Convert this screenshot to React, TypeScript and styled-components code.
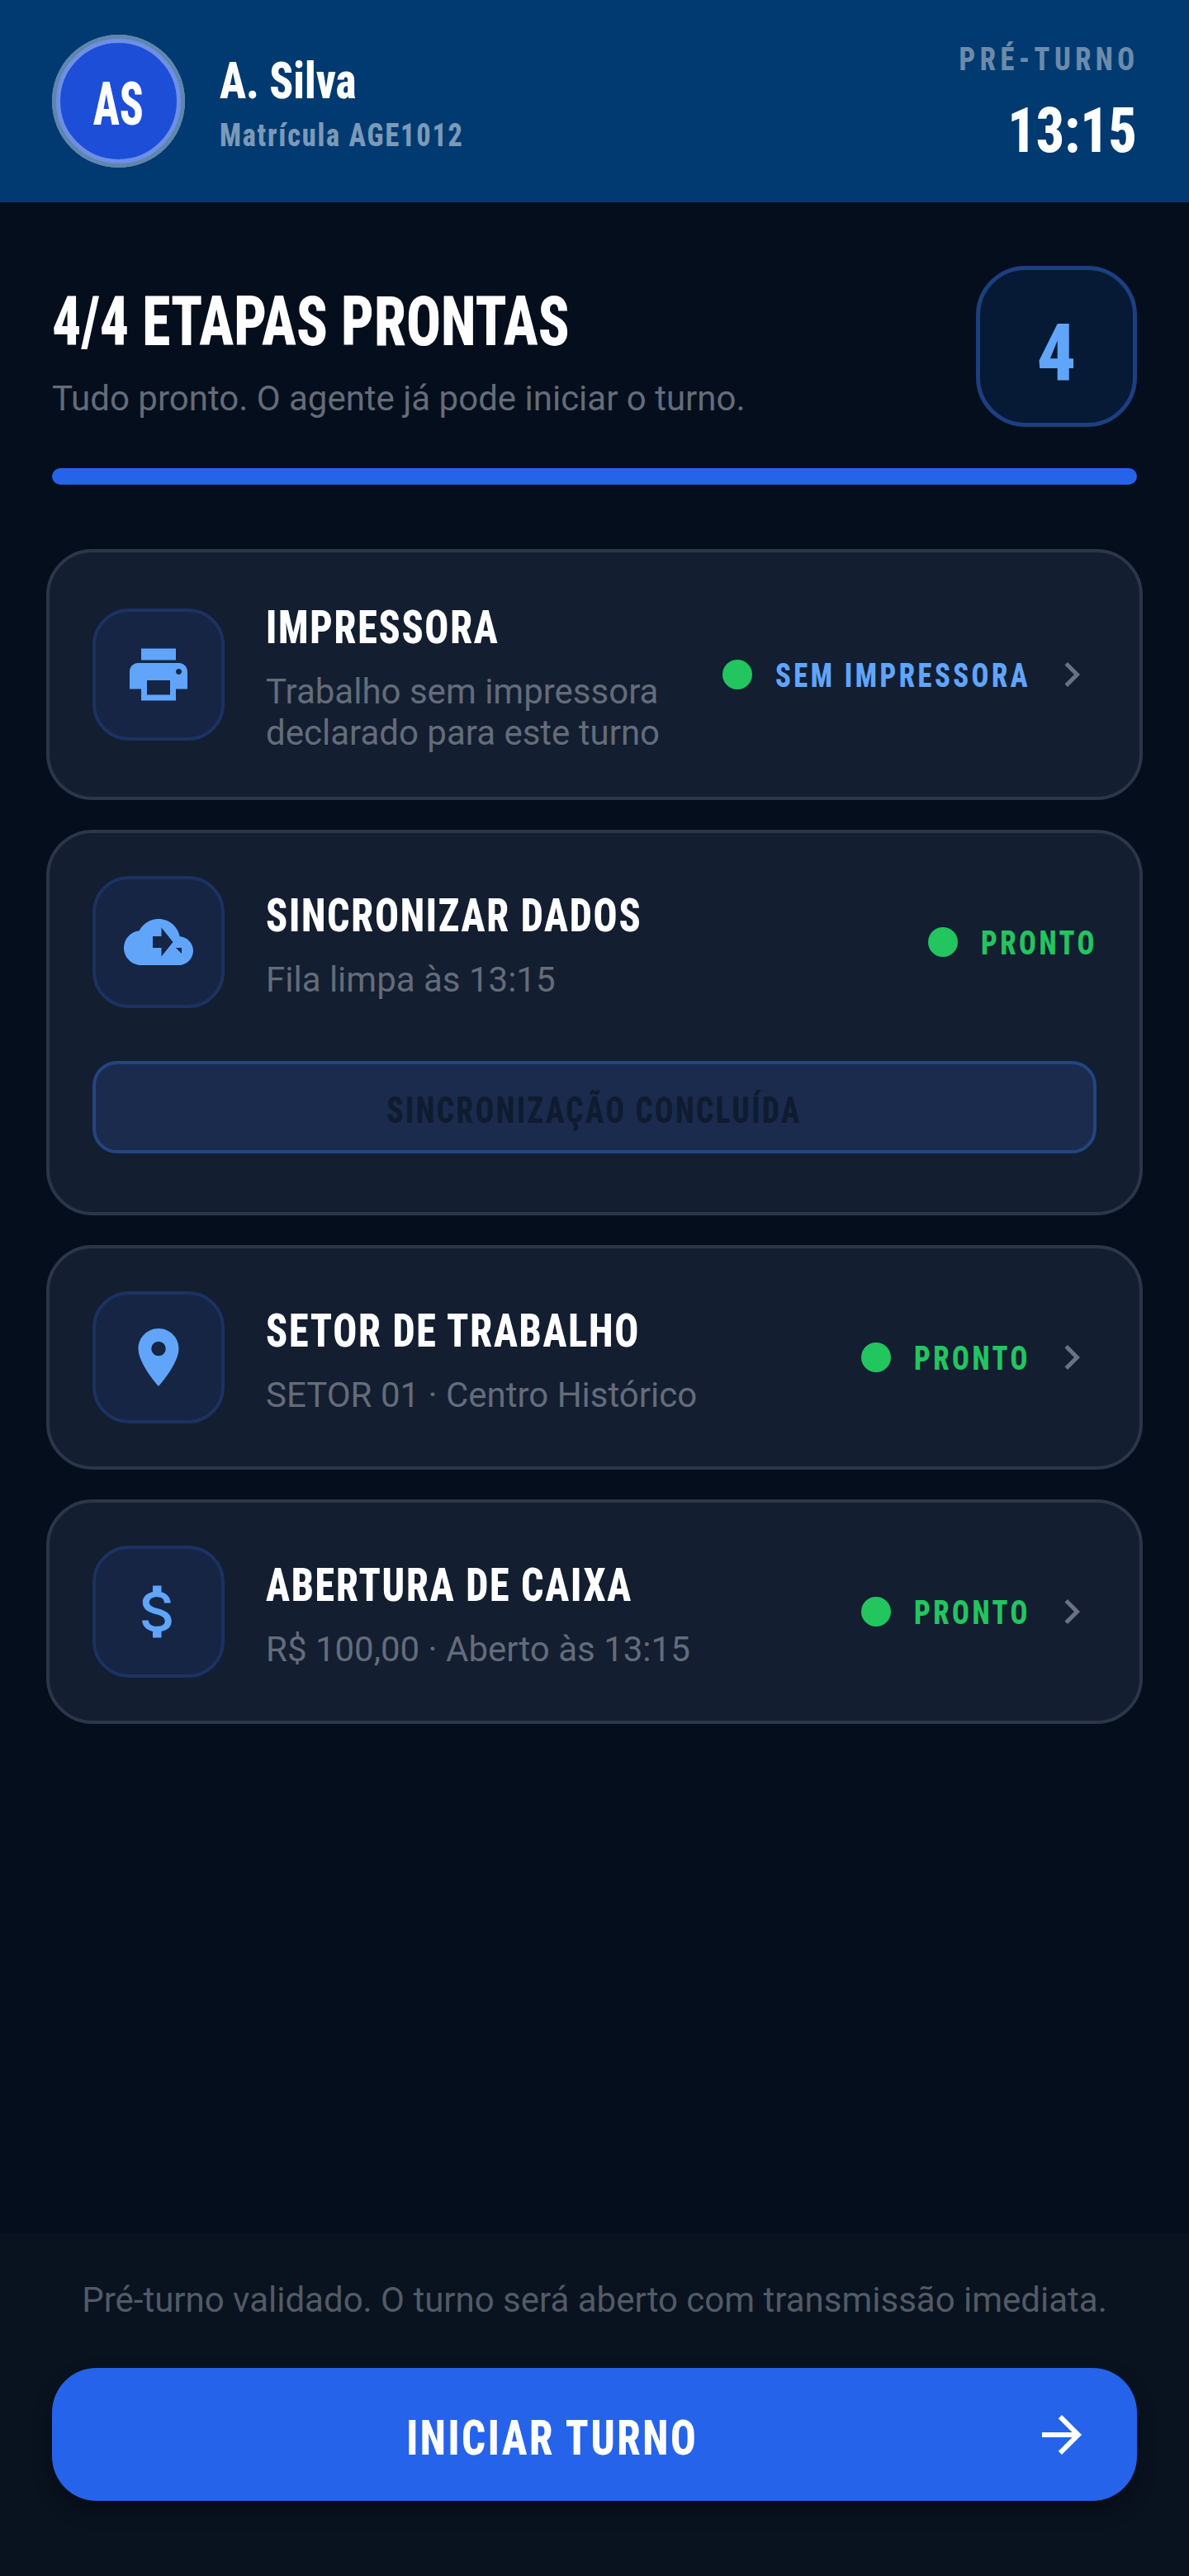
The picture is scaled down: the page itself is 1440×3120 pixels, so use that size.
import { FC, ReactNode } from "react";
import styled, { createGlobalStyle, css } from "styled-components";
import { MdPrint, MdLocationOn, MdAttachMoney, MdArrowForward, MdChevronRight } from "react-icons/md";

const GlobalStyle = createGlobalStyle`
  html, body { margin: 0; padding: 0; background: #050e1c; }
  * { box-sizing: border-box; }
`;

// no Barlow Condensed on this machine: Roboto at its narrowest width, squeezed a bit more
const condensed = (size: number, squeeze: number, origin = "left") => css`
  display: inline-block;
  white-space: nowrap;
  font-family: "Roboto", sans-serif;
  font-stretch: 75%;
  font-weight: 800;
  font-size: ${size}px;
  transform: scaleX(${squeeze});
  transform-origin: ${origin} center;
`;

const CloudIcon: FC = () => (
  <svg width="84" height="84" viewBox="0 0 24 24" fill="currentColor" fillRule="evenodd">
    <path d="M19.35 10.04C18.67 6.59 15.64 4 12 4 9.11 4 6.6 5.64 5.35 8.04 2.34 8.36 0 10.91 0 14c0 3.31 2.69 6 6 6h13c2.76 0 5-2.24 5-5 0-2.64-2.05-4.78-4.65-4.96zM10 10h3V7l4 5-4 5v-3h-3zM18 14h2v2z" />
  </svg>
);

type StepProps = {
  icon: ReactNode;
  title: string;
  detail: ReactNode;
  status: string;
  statusWidth: number;
  tone?: "green" | "blue";
  chevron?: boolean;
  children?: ReactNode;
};

const Step: FC<StepProps> = ({ icon, title, detail, status, statusWidth, tone = "green", chevron = true, children }) => (
  <Card>
    <CardRow>
      <IconBox>{icon}</IconBox>
      <CardText>
        <CardTitle>{title}</CardTitle>
        <CardDetail>{detail}</CardDetail>
      </CardText>
      <Status>
        <Dot />
        <StatusLabel $tone={tone} $width={statusWidth}>{status}</StatusLabel>
      </Status>
      {chevron && <Chevron><MdChevronRight size={60} /></Chevron>}
    </CardRow>
    {children}
  </Card>
);

export default function App() {
  return (
    <Page>
      <GlobalStyle />
      <Header>
        <Avatar><AvatarText>AS</AvatarText></Avatar>
        <AgentInfo>
          <AgentName>A. Silva</AgentName>
          <AgentId>Matrícula AGE1012</AgentId>
        </AgentInfo>
        <ShiftInfo>
          <ShiftLabel>PRÉ-TURNO</ShiftLabel>
          <ShiftTime>13:15</ShiftTime>
        </ShiftInfo>
      </Header>
      <Summary>
        <SummaryTop>
          <SummaryCopy>
            <SummaryTitle>4/4 ETAPAS PRONTAS</SummaryTitle>
            <SummaryText>Tudo pronto. O agente já pode iniciar o turno.</SummaryText>
          </SummaryCopy>
          <CountBadge><CountDigit>4</CountDigit></CountBadge>
        </SummaryTop>
        <ProgressTrack />
      </Summary>
      <Steps>
        <Step
          icon={<MdPrint size={84} />}
          title="IMPRESSORA"
          detail={<>Trabalho sem impressora<br />declarado para este turno</>}
          status="SEM IMPRESSORA"
          statusWidth={308}
          tone="blue"
        />
        <Step icon={<CloudIcon />} title="SINCRONIZAR DADOS" detail="Fila limpa às 13:15" status="PRONTO" statusWidth={140} chevron={false}>
          <SyncButton><SyncLabel>SINCRONIZAÇÃO CONCLUÍDA</SyncLabel></SyncButton>
        </Step>
        <Step icon={<MdLocationOn size={84} />} title="SETOR DE TRABALHO" detail="SETOR 01 · Centro Histórico" status="PRONTO" statusWidth={140} />
        <Step icon={<MdAttachMoney size={84} />} title="ABERTURA DE CAIXA" detail="R$ 100,00 · Aberto às 13:15" status="PRONTO" statusWidth={140} />
      </Steps>
      <Footer>
        <FooterNote>Pré-turno validado. O turno será aberto com transmissão imediata.</FooterNote>
        <StartButton>
          <StartLabel><StartText>INICIAR TURNO</StartText></StartLabel>
          <MdArrowForward size={72} />
        </StartButton>
      </Footer>
    </Page>
  );
}

const Page = styled.div`
  min-height: 3120px;
  display: flex;
  flex-direction: column;
  background: #050e1c;
  font-family: "Roboto", sans-serif;
`;

const Header = styled.header`
  height: 245px;
  background: #003a70;
  display: flex;
  align-items: center;
  padding: 0 63px;
  gap: 42px;
`;

const Avatar = styled.div`
  width: 161px;
  height: 161px;
  padding-top: 8px;
  border-radius: 50%;
  background: #1d4ed8;
  border: 10px solid #6d8fe6;
  outline: 5px solid #5f86ab;
  outline-offset: -5px;
  display: flex;
  align-items: center;
  justify-content: center;
  color: #fff;
`;

const AvatarText = styled.span`
  ${condensed(72, 0.74, "center")}
`;

const AgentInfo = styled.div`
  flex: 1;
  padding-top: 4px;
  display: flex;
  flex-direction: column;
  align-items: flex-start;
  gap: 9px;
`;

const AgentName = styled.div`
  ${condensed(62, 0.86)}
  color: #fff;
  line-height: 70px;
`;

const AgentId = styled.div`
  ${condensed(38, 0.9)}
  color: #7b99b8;
  letter-spacing: 2px;
`;

const ShiftInfo = styled.div`
  display: flex;
  flex-direction: column;
  align-items: flex-end;
  gap: 26px;
`;

const ShiftLabel = styled.div`
  ${condensed(38, 0.906, "right")}
  margin-right: -3px;
  color: #6b8bab;
  letter-spacing: 6px;
`;

const ShiftTime = styled.div`
  ${condensed(76, 0.89, "right")}
  color: #fff;
  line-height: 76px;
`;

const Summary = styled.section`
  padding: 77px 63px 0;
`;

const SummaryTop = styled.div`
  display: flex;
  justify-content: space-between;
  align-items: flex-start;
`;

const SummaryCopy = styled.div`
  padding-top: 23px;
`;

const SummaryTitle = styled.h1`
  ${condensed(84, 0.83)}
  margin: 0;
  color: #fff;
  line-height: 90px;
`;

const SummaryText = styled.p`
  margin: 23px 0 0;
  color: #646c79;
  font-size: 42px;
  line-height: 50px;
`;

const CountBadge = styled.div`
  width: 195px;
  height: 195px;
  padding-top: 16px;
  border-radius: 60px;
  background: #061935;
  border: 5px solid #1c3f80;
  display: flex;
  align-items: center;
  justify-content: center;
  color: #60a5fa;
`;

const CountDigit = styled.span`
  ${condensed(96, 0.98, "center")}
`;

const ProgressTrack = styled.div`
  margin-top: 50px;
  height: 20px;
  border-radius: 10px;
  background: #2563eb;
`;

const Steps = styled.main`
  display: flex;
  flex-direction: column;
  gap: 36px;
  padding: 78px 56px 0;
`;

const Card = styled.article`
  background: #131e31;
  border: 4px solid #2c3648;
  border-radius: 56px;
  padding: 52px;
`;

const CardRow = styled.div`
  display: flex;
  align-items: center;
`;

const IconBox = styled.div`
  width: 160px;
  height: 160px;
  flex: none;
  border-radius: 44px;
  background: #162544;
  border: 4px solid #1b3263;
  display: flex;
  align-items: center;
  justify-content: center;
  color: #60a5fa;
`;

const CardText = styled.div`
  flex: 1;
  margin-left: 50px;
`;

const CardTitle = styled.div`
  ${condensed(56, 0.86)}
  display: block;
  color: #fff;
  line-height: 78px;
  letter-spacing: 2px;
`;

const CardDetail = styled.div`
  margin-top: 14px;
  color: #646c79;
  font-size: 42px;
  line-height: 50px;
`;

const Status = styled.div`
  display: flex;
  align-items: center;
  gap: 28px;
`;

const Dot = styled.span`
  width: 36px;
  height: 36px;
  border-radius: 50%;
  background: #22c55e;
`;

const StatusLabel = styled.span<{ $tone: "green" | "blue"; $width: number }>`
  ${condensed(40, 0.865)}
  width: ${(p) => p.$width}px;
  margin-top: 3px;
  color: ${(p) => (p.$tone === "green" ? "#22c55e" : "#60a5fa")};
  letter-spacing: 4px;
`;

const Chevron = styled.span`
  display: flex;
  margin-left: 21px;
  color: #6b7280;
`;

const SyncButton = styled.div`
  margin: 64px 0 19px;
  height: 112px;
  padding-top: 6px;
  border-radius: 30px;
  background: #1a2b4e;
  border: 4px solid #234580;
  display: flex;
  align-items: center;
  justify-content: center;
  color: #0f1b2e;
`;

const SyncLabel = styled.span`
  ${condensed(45, 0.825, "center")}
  letter-spacing: 3px;
`;

const Footer = styled.footer`
  margin-top: auto;
  height: 415px;
  background: #09121f;
  padding: 56px 63px 0;
`;

const FooterNote = styled.p`
  margin: 0;
  text-align: center;
  color: #525a66;
  font-size: 42px;
  line-height: 50px;
`;

const StartButton = styled.div`
  margin-top: 57px;
  height: 161px;
  border-radius: 54px;
  background: #2563eb;
  box-shadow: 0 12px 24px rgba(0, 0, 0, 0.3);
  display: flex;
  align-items: center;
  padding: 0 55px 0 58px;
  color: #fff;
`;

const StartLabel = styled.span`
  flex: 1;
  padding: 8px 34px 0 0;
  text-align: center;
`;

const StartText = styled.span`
  ${condensed(60, 0.85, "center")}
  letter-spacing: 3px;
`;
